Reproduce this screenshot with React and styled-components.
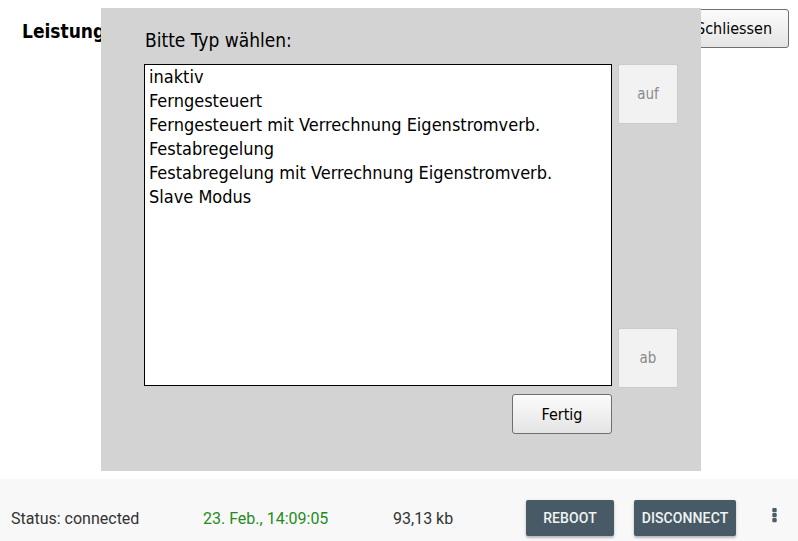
import React from "react";
import styled, { createGlobalStyle } from "styled-components";

const Global = createGlobalStyle`
  html, body { margin: 0; padding: 0; background: #ffffff; }
  body { width: 798px; height: 541px; overflow: hidden; }
  #root { width: 798px; height: 541px; }
`;

const tahoma = `"DejaVu Sans Condensed", "DejaVu Sans", sans-serif`;
const roboto = `Roboto, "Noto Sans", sans-serif`;

const Page = styled.div`
  position: relative;
  width: 798px;
  height: 541px;
  display: flex;
  flex-direction: column;
  background: #ffffff;
`;

const Header = styled.div`
  height: 479px;
  display: flex;
  align-items: flex-start;
  justify-content: space-between;
  padding: 9px 9px 0 22px;
  box-sizing: border-box;
`;

const Title = styled.h1`
  margin: 11px 0 0 0;
  font-family: ${tahoma};
  font-weight: bold;
  font-size: 19px;
  line-height: 22px;
  color: #000;
`;

const ClassicButton = styled.button`
  width: ${(p) => p.$w}px;
  height: ${(p) => p.$h}px;
  padding: 0;
  border: 1px solid #6f6f6f;
  border-radius: 3px;
  background: linear-gradient(#fbfbfb, #f0f0f0 50%, #e4e4e4);
  font-family: ${tahoma};
  font-size: 16px;
  color: #000;
  box-sizing: border-box;
`;

const Dialog = styled.div`
  position: absolute;
  left: 101px;
  top: 8px;
  width: 600px;
  height: 463px;
  background: #d3d3d3;
  box-sizing: border-box;
  padding: 21px 0 0 43px;
  display: flex;
  flex-direction: column;
`;

const Prompt = styled.div`
  font-family: ${tahoma};
  font-size: 19px;
  line-height: 22px;
  color: #000;
  padding-left: 1px;
`;

const Body = styled.div`
  margin-top: 13px;
  display: grid;
  grid-template-columns: 468px 60px;
  grid-template-rows: 322px auto;
  column-gap: 6px;
  row-gap: 8px;
`;

const List = styled.ul`
  list-style: none;
  margin: 0;
  padding: 0 4px;
  background: #fff;
  border: 1px solid #000;
  box-sizing: border-box;
  overflow: hidden;
`;

const Item = styled.li`
  font-family: ${tahoma};
  font-size: 18px;
  line-height: 24px;
  color: #000;
  white-space: nowrap;
`;

const ScrollCol = styled.div`
  display: flex;
  flex-direction: column;
  justify-content: space-between;
  height: 324px;
`;

const FlatButton = styled.button`
  width: 60px;
  height: 60px;
  padding: 0;
  border: 1px solid #cbcbcb;
  border-radius: 2px;
  background: #f2f2f2;
  font-family: ${tahoma};
  font-size: 15px;
  color: #8a8a8a;
  box-sizing: border-box;
`;

const FooterRow = styled.div`
  display: flex;
  justify-content: flex-end;
`;

const StatusBar = styled.div`
  height: 62px;
  background: #f8f8f8;
  display: flex;
  align-items: flex-start;
  padding: 21px 0 0 11px;
  box-sizing: border-box;
`;

const Info = styled.span`
  width: ${(p) => p.$w}px;
  flex: none;
  font-family: ${roboto};
  font-size: 16px;
  line-height: 38px;
  color: ${(p) => p.$color || "#333"};
`;

const Action = styled.button`
  height: 36px;
  width: ${(p) => p.$w}px;
  margin-right: ${(p) => p.$mr || 0}px;
  flex: none;
  padding: 0;
  border: none;
  border-radius: 2px;
  background: #475a65;
  color: #f1f3f4;
  font-family: ${roboto};
  font-weight: 500;
  font-size: 14px;
  letter-spacing: 0.1px;
  box-shadow: 0 2px 2px rgba(0, 0, 0, 0.2), 0 1px 4px rgba(0, 0, 0, 0.1);
`;

const Kebab = styled.svg`
  flex: none;
  margin-top: 8px;
  display: block;
`;

const items = [
  "inaktiv",
  "Ferngesteuert",
  "Ferngesteuert mit Verrechnung Eigenstromverb.",
  "Festabregelung",
  "Festabregelung mit Verrechnung Eigenstromverb.",
  "Slave Modus",
];

export default function App() {
  return (
    <Page>
      <Global />
      <Header>
        <Title>Leistungsbegrenzung</Title>
        <ClassicButton $w={110} $h={39}>Schliessen</ClassicButton>
      </Header>
      <Dialog>
        <Prompt>Bitte Typ wählen:</Prompt>
        <Body>
          <List>
            {items.map((t) => (
              <Item key={t}>{t}</Item>
            ))}
          </List>
          <ScrollCol>
            <FlatButton>auf</FlatButton>
            <FlatButton>ab</FlatButton>
          </ScrollCol>
          <FooterRow>
            <ClassicButton $w={100} $h={40}>Fertig</ClassicButton>
          </FooterRow>
        </Body>
      </Dialog>
      <StatusBar>
        <Info $w={192}>Status: connected</Info>
        <Info $w={190} $color="#1f8c1f">23. Feb., 14:09:05</Info>
        <Info $w={133}>93,13 kb</Info>
        <Action $w={88} $mr={20}>REBOOT</Action>
        <Action $w={102} $mr={36}>DISCONNECT</Action>
        <Kebab width="5" height="15" viewBox="0 0 5 15">
          <rect x="0.3" y="0" width="4.4" height="4.2" rx="1" fill="#4a5d69" />
          <rect x="0.3" y="5" width="4.4" height="4.2" rx="1" fill="#4a5d69" />
          <rect x="0.3" y="10" width="4.4" height="4.2" rx="1" fill="#4a5d69" />
        </Kebab>
      </StatusBar>
    </Page>
  );
}
